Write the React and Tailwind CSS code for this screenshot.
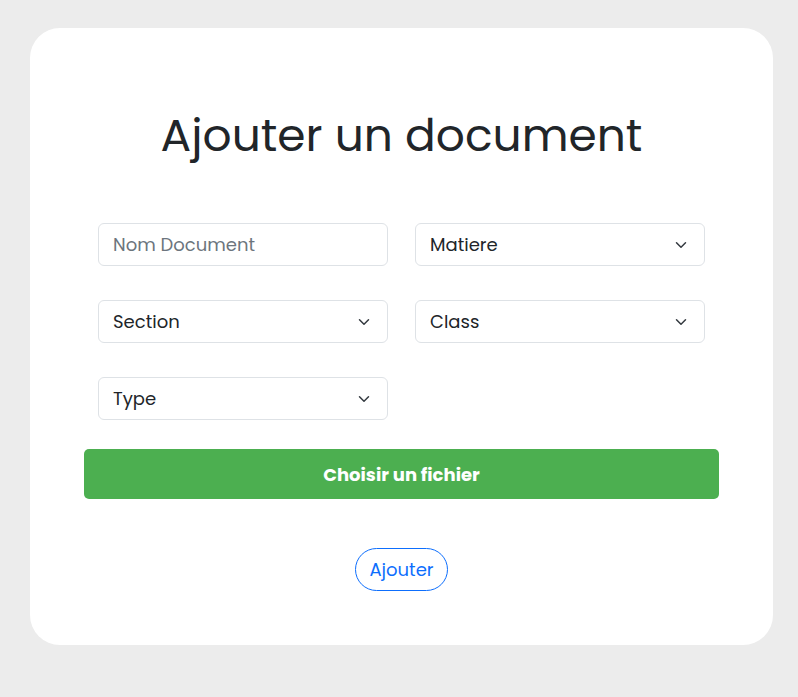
import React from 'react';

const font = { fontFamily: 'Poppins, Inter, "Noto Sans", sans-serif' };

function Chevron() {
  return (
    <svg width="12" height="12" viewBox="0 0 16 16" fill="none" className="shrink-0">
      <path d="M2 5l6 6 6-6" stroke="#343a40" strokeWidth="2" strokeLinecap="round" strokeLinejoin="round" />
    </svg>
  );
}

function Select({ label }) {
  return (
    <div className="flex h-[43px] items-center justify-between rounded-md border border-[#dee2e6] bg-white pl-[14px] pr-[17px] text-[18px] text-[#212529]">
      <span>{label}</span>
      <Chevron />
    </div>
  );
}

export default function App() {
  return (
    <div className="min-h-screen bg-[#ececec] pt-[28px] pl-[30px]" style={font}>
      <div className="flex w-[743px] flex-col items-center rounded-[30px] bg-white pt-[81px] pb-[54px]">
        <h1 className="text-[45.5px] leading-[53px] font-normal text-[#212529]">Ajouter un document</h1>

        <div className="mt-[61px] grid w-[607px] grid-cols-2 gap-x-[27px] gap-y-[34px]">
          <div className="flex h-[43px] items-center rounded-md border border-[#dee2e6] bg-white px-[14px] text-[18px] text-[#6c757d]">
            Nom Document
          </div>
          <Select label="Matiere" />
          <Select label="Section" />
          <Select label="Class" />
          <Select label="Type" />
        </div>

        <button className="mt-[29px] flex h-[50px] w-[635px] items-center justify-center rounded-[5px] bg-[#4caf50] text-[18px] font-bold text-white">
          Choisir un fichier
        </button>

        <button className="mt-[49px] flex h-[43px] w-[93px] items-center justify-center rounded-full border border-[#0d6efd] text-[18px] text-[#0d6efd]">
          Ajouter
        </button>
      </div>
    </div>
  );
}
